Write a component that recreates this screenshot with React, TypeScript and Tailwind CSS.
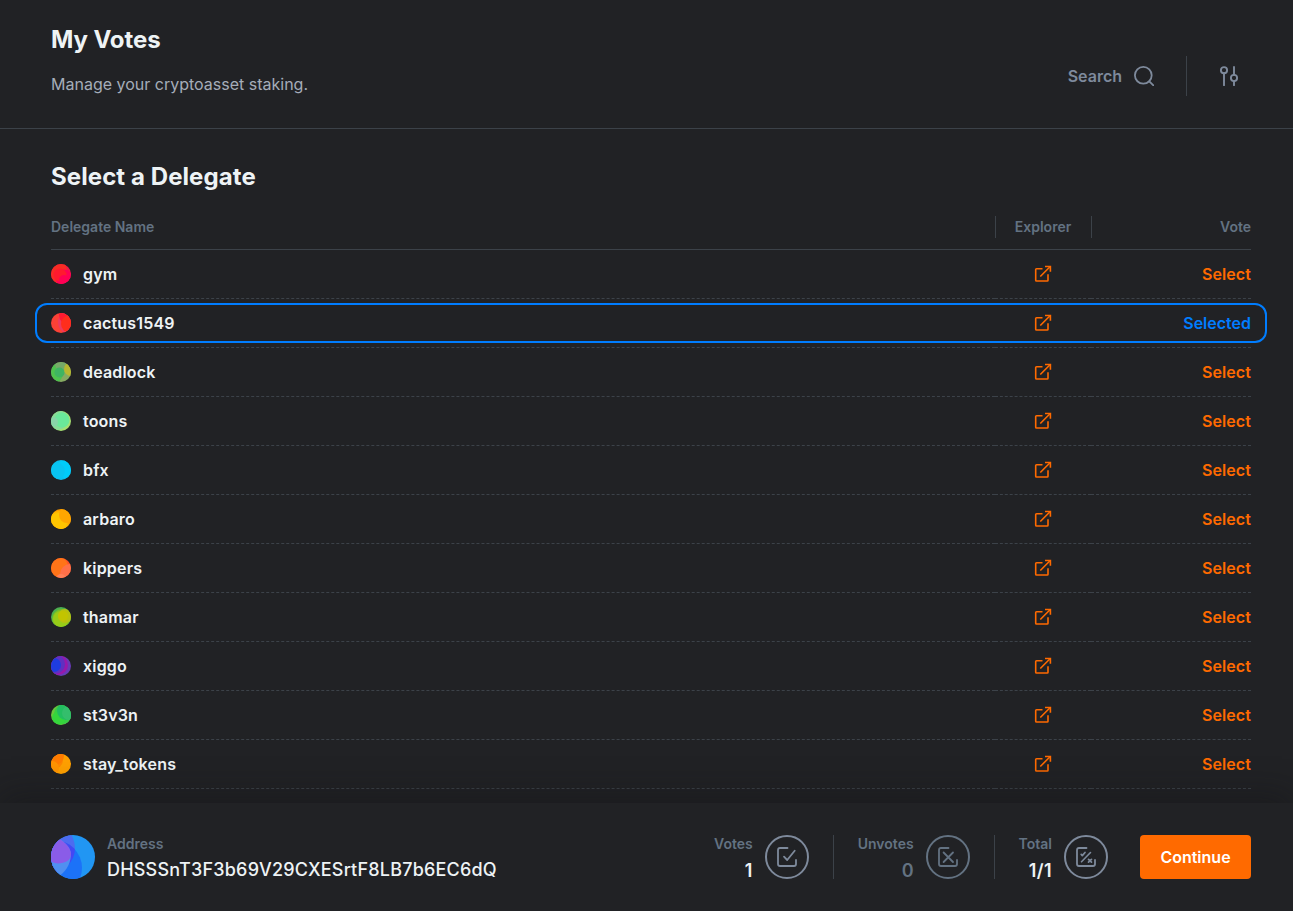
import React from "react";

type Blob = [number, number, number, string];
type Delegate = { name: string; base: string; blobs: Blob[]; selected?: boolean };

const delegates: Delegate[] = [
  { name: "gym", base: "#f01848", blobs: [[3, 7, 13, "#f82c24"], [13, 14, 8.5, "#ff0055"], [9, 11, 6.5, "#ff1a2e"], [13, 16, 5, "#ff0055"]] },
  { name: "cactus1549", base: "#fb4136", blobs: [[19, 9, 12, "#ee3a60"], [18, 2, 10, "#ff1a30"], [19, 11, 9, "#ff2e1c"]], selected: true },
  { name: "deadlock", base: "#86aa62", blobs: [[1, 11, 11, "#4ec24e"], [11, 2, 7, "#76aa68"], [8.5, 10.5, 5, "#3fb462"], [20, 7, 7, "#b8b830"]] },
  { name: "toons", base: "#a6e072", blobs: [[7, 9, 10, "#88dc98"], [11, 9, 7.5, "#6ae89a"], [2, 11, 5, "#88d4a8"]] },
  { name: "bfx", base: "#0cc0ee", blobs: [[14, 9, 9, "#00ccfa"], [6, 11, 8, "#08c4f2"]] },
  { name: "arbaro", base: "#ff9c00", blobs: [[8, 12, 10, "#ffb800"], [7, 13, 9, "#ffc400"], [16, 6, 8, "#ffa600"]] },
  { name: "kippers", base: "#ff5226", blobs: [[6, 9, 11, "#ff7418"], [19, 16, 10, "#ff7048"], [10, 21, 5, "#ff8058"]] },
  { name: "thamar", base: "#4caf50", blobs: [[11, 12, 10, "#78be28"], [10, 12, 8, "#98cc18"], [14, 9, 7, "#b8c010"], [12, 9, 5, "#c2c400"]] },
  { name: "xiggo", base: "#673ab7", blobs: [[7, 9, 10, "#9818aa"], [4, 8, 10, "#6030c0"], [3, 9, 7, "#1e3ce0"]] },
  { name: "st3v3n", base: "#6cc63c", blobs: [[13, 9, 10, "#38cc48"], [8, 13, 7, "#35d63c"], [15, 6, 9, "#22be60"], [18, 8, 7, "#34be6c"]] },
  { name: "stay_tokens", base: "#ffa000", blobs: [[3, 6, 9, "#ff8800"], [4, 2, 9, "#ff7c00"], [1, 14, 7, "#ff9400"]] },
];

function Avatar({ id, base, blobs }: { id: string; base: string; blobs: Blob[] }) {
  return (
    <svg className="size-5 shrink-0" viewBox="0 0 20 20">
      <clipPath id={id}><circle cx="10" cy="10" r="10" /></clipPath>
      <g clipPath={`url(#${id})`}>
        <rect width="20" height="20" fill={base} />
        {blobs.map(([x, y, r, color], i) => <circle key={i} cx={x} cy={y} r={r} fill={color} />)}
      </g>
    </svg>
  );
}

function WalletAvatar() {
  return (
    <svg className="size-11 shrink-0" viewBox="0 0 44 44">
      <clipPath id="wallet"><circle cx="22" cy="22" r="22" /></clipPath>
      <clipPath id="wallet-top"><circle cx="-1" cy="13" r="25" /></clipPath>
      <g clipPath="url(#wallet)">
        <rect width="44" height="44" fill="#2196f3" />
        <circle cx="-1" cy="13" r="25" fill="#4c6cf0" />
        <circle cx="3" cy="33" r="28" fill="#1c72f8" />
        <g clipPath="url(#wallet-top)"><circle cx="3" cy="33" r="28" fill="#4348f4" /></g>
        <path d="M-4 0L10 5C16 9 20 14 20 20C19 31 14 37 7 42L-4 44Z" fill="#5090f0" />
        <path d="M-4 0L10 5C16 9 20 14 20 20C19 25 16 27 11 28C6 29 2 28-1 26Z" fill="#8a5ce8" />
      </g>
    </svg>
  );
}

function ExternalIcon() {
  return (
    <svg className="h-[18px] w-[18px]" viewBox="0 0 18 18" fill="none" stroke="#ff6a00" strokeWidth="1.6" strokeLinejoin="round">
      <path d="M8.5 3.7H2.5Q1.7 3.7 1.7 4.5V15.2Q1.7 16 2.5 16H13.2Q14 16 14 15.2V9.2M6.3 11.5L16 1.8" />
      <path d="M11 1.5H16.4V6.8" strokeLinejoin="miter" />
    </svg>
  );
}

function VoteIcon({ kind }: { kind: "vote" | "unvote" | "total" }) {
  return (
    <svg className="size-5" viewBox="0 0 20 20" fill="none" stroke="currentColor" strokeWidth="1.8" strokeLinecap="round" strokeLinejoin="round">
      <path d="M10.5 1H3Q1 1 1 3V17Q1 19 3 19H17Q19 19 19 17V13" />
      {kind === "vote" && <path d="M7 9.7L10.2 13L17.7 3.8" />}
      {kind === "unvote" && <path d="M5.6 5.5L15 15M15 5.5L5.6 15" />}
      {kind === "total" && <>
        <path d="M5.5 14.8L14.5 5.5" strokeWidth="1.6" />
        <path d="M5.2 7.4L6.3 8.6L9 5.5M12.5 12.3L15.5 15.2M15.5 12.3L12.5 15.2" strokeWidth="1.7" />
      </>}
    </svg>
  );
}

function Counter({ label, value, kind, muted = false }: { label: string; value: string; kind: "vote" | "unvote" | "total"; muted?: boolean }) {
  return (
    <div className="flex h-11 items-center">
      <div className="flex h-11 flex-col items-end">
        <span className="text-sm leading-[17px] font-semibold text-[#637282]">{label}</span>
        <span className={muted ? "mt-[7px] text-lg leading-[23px] font-semibold text-[#637282]" : "mt-[7px] text-lg leading-[23px] font-semibold tracking-[0.4px] text-[#eef3f5]"}>{value}</span>
      </div>
      <div className={muted ? "ml-3 flex size-11 items-center justify-center rounded-full border-2 border-[#637282] text-[#637282]" : "ml-3 flex size-11 items-center justify-center rounded-full border-2 border-[#7e8a9c] text-[#7e8a9c]"}>
        <VoteIcon kind={kind} />
      </div>
    </div>
  );
}

export default function App() {
  return (
    <div className="flex h-[911px] w-full flex-col overflow-hidden bg-[#212225] font-[Inter,sans-serif] text-[#eef3f5]">
      <header className="flex h-[129px] shrink-0 justify-between border-b border-[#3c4249] pr-[54px] pl-[51px]">
        <div>
          <h1 className="mt-[25px] text-2xl leading-[30px] font-bold tracking-[-0.08px]">My Votes</h1>
          <p className="mt-[17px] text-base leading-6 text-[#a5adb9]">Manage your cryptoasset staking.</p>
        </div>
        <div className="mt-14 flex h-10 items-center text-[#7e8a9c]">
          <span className="font-semibold">Search</span>
          <svg className="ml-3 size-5" viewBox="0 0 20 20" fill="none" stroke="currentColor" strokeWidth="1.8" strokeLinecap="round">
            <circle cx="9.3" cy="9.3" r="8.4" /><path d="M15.3 15.3L19.4 19.4" />
          </svg>
          <span className="ml-8 h-10 w-px bg-[#3c4249]" />
          <svg className="ml-8 size-5" viewBox="0 0 20 20" fill="none" stroke="currentColor" strokeWidth="1.9" strokeLinecap="round">
            <circle cx="5" cy="4.2" r="3.1" /><path d="M5 7.3V19.2" />
            <circle cx="15" cy="12" r="3.1" /><path d="M15 1V8.9M15 15.1V19.2" />
          </svg>
        </div>
      </header>
      <main className="min-h-0 flex-1 pr-[42px] pl-[51px]">
        <h2 className="mt-[33px] text-2xl leading-[30px] font-bold tracking-[0.08px]">Select a Delegate</h2>
        <div className="mt-[13px] flex h-[45px] items-center border-b border-[#3c4249] text-sm font-semibold text-[#637282]">
          <span className="flex-1">Delegate Name</span>
          <span className="flex h-[22px] w-[97px] items-center justify-center border-x border-[#3c4249] pr-px">Explorer</span>
          <span className="w-[159px] text-right">Vote</span>
        </div>
        {delegates.map((d) => (
          <div key={d.name} className="h-[49px]">
            <div className={d.selected ? "-mx-4 flex h-12 items-center" : "flex h-12 items-center"}>
              <div className={d.selected ? "flex h-10 w-full items-center rounded-xl border-2 border-[#007dff] px-[14px]" : "flex w-full items-center"}>
                <Avatar id={`avatar-${d.name}`} base={d.base} blobs={d.blobs} />
                <span className="ml-3 flex-1 font-semibold tracking-[0.18px]">{d.name}</span>
                <span className="flex w-[97px] justify-center pr-0.5"><ExternalIcon /></span>
                <span className={d.selected ? "w-[159px] text-right font-semibold text-[#007dff]" : "w-[159px] text-right font-semibold tracking-[0.1px] text-[#ff6a00]"}>{d.selected ? "Selected" : "Select"}</span>
              </div>
            </div>
            <div className="flex h-px">
              <span className="flex-1 border-b border-dashed border-[#3c4249]" />
              <span className="w-24 border-b border-dashed border-[#3c4249]" />
              <span className="w-40 border-b border-dashed border-[#3c4249]" />
            </div>
          </div>
        ))}
      </main>
      <footer className="z-10 flex h-[108px] shrink-0 items-start bg-[#212225] pt-8 pr-[42px] pl-[51px] shadow-[0_-8px_32px_rgba(18,18,19,0.4)]">
        <WalletAvatar />
        <div className="ml-3 flex flex-1 flex-col">
          <span className="text-sm leading-[17px] font-semibold text-[#637282]">Address</span>
          <span className="mt-1.5 text-lg leading-[23px] font-medium tracking-[0.2px]">DHSSSnT3F3b69V29CXESrtF8LB7b6EC6dQ</span>
        </div>
        <Counter label="Votes" value="1" kind="vote" />
        <span className="mx-6 h-11 w-px bg-[#3c4249]" />
        <Counter label="Unvotes" value="0" kind="unvote" muted />
        <span className="mx-6 h-11 w-px bg-[#3c4249]" />
        <Counter label="Total" value="1/1" kind="total" />
        <button className="ml-8 h-11 w-[111px] rounded bg-[#ff6a00] font-semibold text-white">Continue</button>
      </footer>
    </div>
  );
}
